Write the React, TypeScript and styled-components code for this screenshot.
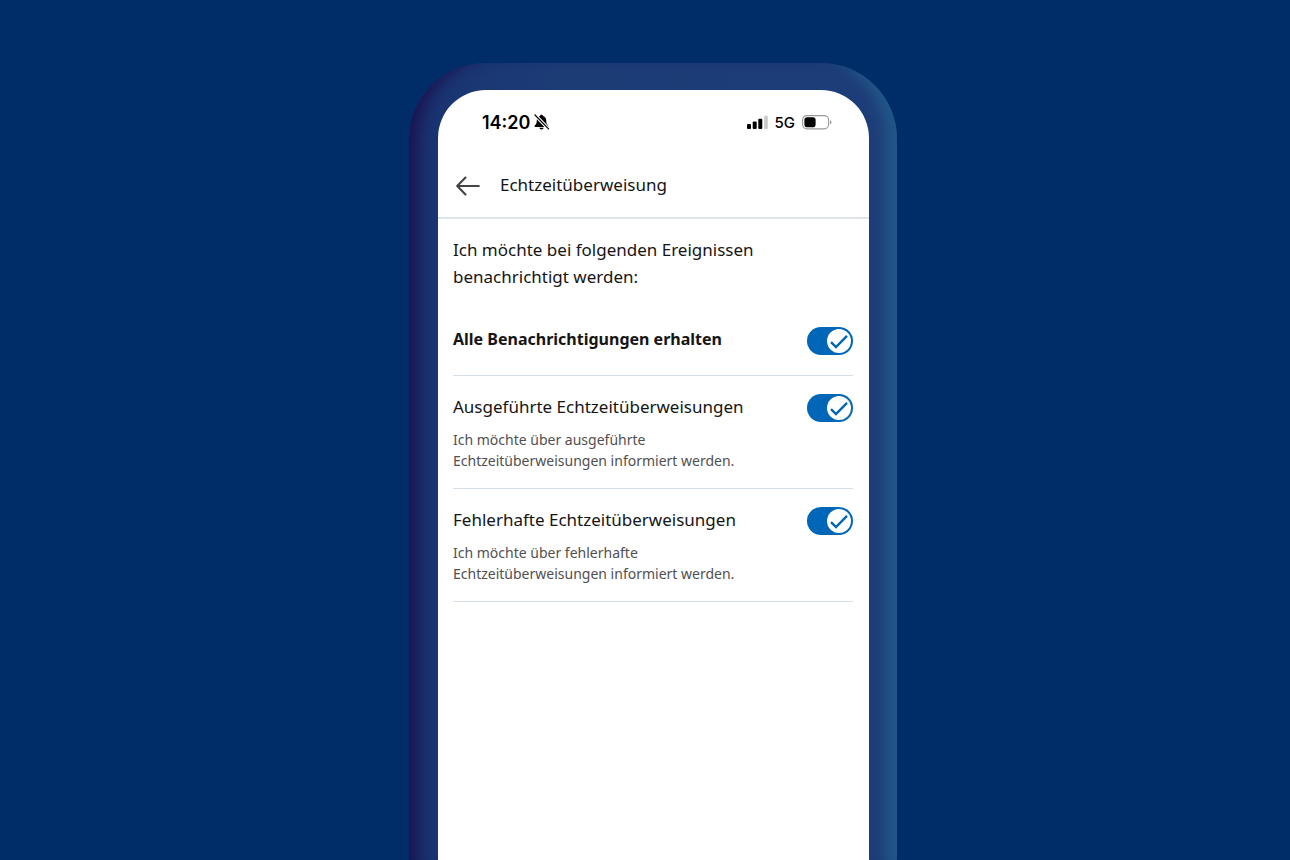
import React, { useState } from "react";
import styled, { createGlobalStyle } from "styled-components";

const GlobalStyle = createGlobalStyle`
  *, *::before, *::after { box-sizing: border-box; }
  body {
    margin: 0;
    background: #002d68;
    color: #151515;
    font-family: "Noto Sans", "Open Sans", sans-serif;
  }
`;

const Page = styled.main`
  display: flex;
  justify-content: center;
  min-height: 100vh;
  padding: 63px 0 0 16px;
  background: #002d68;
`;

const Phone = styled.div`
  display: flex;
  width: 100%;
  max-width: 488px;
  padding: 27px 28px 0 29px;
  border-radius: 76px 76px 0 0;
  background: linear-gradient(90deg, #193370 0%, #1c3c76 30%, #1d3d78 100%);
  box-shadow:
    inset 22px 2px 16px -13px #191452,
    inset -24px 0 14px -12px #225788;
`;

const Screen = styled.div`
  flex: 1;
  min-width: 0;
  border-radius: 48px 48px 0 0;
  background: #fff;
`;

const StatusBar = styled.div`
  display: flex;
  align-items: center;
  justify-content: space-between;
  height: 64px;
  padding: 0 37px 0 44px;
  color: #000;
  font-family: Inter, sans-serif;
`;

const StatusGroup = styled.div<{ $gap: number }>`
  display: flex;
  align-items: center;
  gap: ${({ $gap }) => $gap}px;
`;

const Time = styled.time`
  padding-top: 2px;
  font-size: 18px;
  font-weight: 600;
  line-height: 24px;
`;

const Network = styled.span`
  padding-top: 2px;
  font-size: 15px;
  font-weight: 500;
  line-height: 20px;
`;

const Header = styled.header`
  display: flex;
  align-items: center;
  gap: 20px;
  height: 65px;
  padding: 0 18px;
  border-bottom: 2px solid #dde5ec;
`;

const BackButton = styled.button`
  display: flex;
  padding: 0;
  border: 0;
  background: none;
  color: #444;
  cursor: pointer;
`;

const Title = styled.h1`
  margin: 0;
  padding-bottom: 2px;
  font-size: 17px;
  font-weight: 400;
  line-height: 25px;
`;

const Content = styled.section`
  padding: 17px 16px 32px 15px;
`;

const Intro = styled.p`
  max-width: 320px;
  margin: 0 0 19px;
  font-size: 17px;
  line-height: 27px;
`;

const Row = styled.div<{ $compact?: boolean }>`
  display: flex;
  align-items: flex-start;
  justify-content: space-between;
  padding: 18px 0 ${({ $compact }) => ($compact ? 20 : 17)}px;
  border-bottom: 1px solid #d5dfe9;
`;

const RowText = styled.div`
  display: flex;
  flex-direction: column;
  gap: 10px;
`;

const Label = styled.label<{ $strong?: boolean }>`
  font-size: ${({ $strong }) => ($strong ? 16 : 17)}px;
  font-weight: ${({ $strong }) => ($strong ? 700 : 400)};
  line-height: 25px;
`;

const Description = styled.p`
  max-width: 290px;
  margin: 0;
  color: #505050;
  font-size: 14px;
  line-height: 21px;
`;

const SwitchBox = styled.span`
  display: grid;
  flex: none;
  width: 46px;
  height: 28px;

  & > * {
    grid-area: 1 / 1;
  }
`;

const SwitchInput = styled.input`
  width: 46px;
  height: 28px;
  margin: 0;
  border-radius: 14px;
  appearance: none;
  background: #b4bdc6;
  cursor: pointer;

  &:checked {
    background: #0066b8;
  }
`;

const Knob = styled.span<{ $on: boolean }>`
  display: flex;
  align-self: center;
  justify-self: ${({ $on }) => ($on ? "end" : "start")};
  width: 24px;
  height: 24px;
  margin: 0 2px;
  border-radius: 50%;
  background: #fff;
  pointer-events: none;
`;

interface SettingProps {
  id: string;
  label: string;
  description?: string;
  strong?: boolean;
  checked: boolean;
  onChange: (checked: boolean) => void;
}

function Setting({ id, label, description, strong, checked, onChange }: SettingProps) {
  return (
    <Row $compact={!description}>
      <RowText>
        <Label htmlFor={id} $strong={strong}>{label}</Label>
        {description && <Description>{description}</Description>}
      </RowText>
      <SwitchBox>
        <SwitchInput
          id={id}
          type="checkbox"
          checked={checked}
          onChange={(e) => onChange(e.target.checked)}
        />
        <Knob $on={checked}>
          {checked && (
            <svg width="24" height="24" viewBox="0 0 24 24" fill="none" stroke="#0066b8" strokeWidth="2.4" aria-hidden="true">
              <path d="M4 13.2 9 18 20 6.800" />
            </svg>
          )}
        </Knob>
      </SwitchBox>
    </Row>
  );
}

const MutedBell = () => (
  <svg width="17" height="18" viewBox="-0.5 -0.5 18 19" aria-hidden="true">
    <path
      fill="#000"
      d="M8.5 1.2c-.9 0-1.6.6-1.7 1.4C4.6 3.3 3.5 5 3.500 7.300c0 2.700-.6 3.800-1.600 4.800-.5.5-.7.8-.7 1.300 0 .6.5 1 1.100 1h12.400c.6 0 1.100-.4 1.100-1 0-.5-.2-.8-.7-1.300-1-1-1.600-2.100-1.600-4.800 0-2.300-1.100-4-3.300-4.700-.1-.8-.8-1.400-1.700-1.400ZM6.300 15.200c.2 1.100 1.100 1.800 2.200 1.800s2-.7 2.200-1.800Z"
    />
    <path d="M1.600 1.600 16 16.300" stroke="#fff" strokeWidth="3.600" />
    <path d="M1.600 1.600 16 16.300" stroke="#000" strokeWidth="1.300" strokeLinecap="round" />
  </svg>
);

const Signal = () => (
  <svg width="21" height="16" viewBox="0 0 21 16" aria-hidden="true">
    <rect x="0" y="10" width="4" height="5" rx="1.100" />
    <rect x="5.700" y="7.500" width="4" height="7.500" rx="1.100" />
    <rect x="11.300" y="4.700" width="4" height="10.300" rx="1.100" />
    <rect x="17.200" y="1.800" width="3.600" height="13.200" rx="1.100" fill="#c9c9c9" />
  </svg>
);

const Battery = () => (
  <svg width="30" height="15" viewBox="0 0 30 15" aria-hidden="true">
    <rect x="0.600" y="0.600" width="26" height="13.300" rx="4.300" fill="none" stroke="#999" strokeWidth="1.100" />
    <rect x="2.400" y="2.300" width="11.200" height="9.900" rx="2.800" />
    <path d="M28 5.200v4.200c.9-.4 1.500-1.200 1.500-2.100s-.6-1.700-1.500-2.100Z" fill="#999" />
  </svg>
);

const notifications = [
  {
    id: "executed",
    label: "Ausgeführte Echtzeitüberweisungen",
    description: "Ich möchte über ausgeführte Echtzeitüberweisungen informiert werden.",
  },
  {
    id: "failed",
    label: "Fehlerhafte Echtzeitüberweisungen",
    description: "Ich möchte über fehlerhafte Echtzeitüberweisungen informiert werden.",
  },
];

export default function App() {
  const [enabled, setEnabled] = useState<Record<string, boolean>>({ executed: true, failed: true });
  const all = notifications.every(({ id }) => enabled[id]);

  return (
    <>
      <GlobalStyle />
      <Page>
        <Phone>
          <Screen>
            <StatusBar>
              <StatusGroup $gap={3}>
                <Time>14:20</Time>
                <MutedBell />
              </StatusGroup>
              <StatusGroup $gap={7}>
                <Signal />
                <Network>5G</Network>
                <Battery />
              </StatusGroup>
            </StatusBar>
            <Header>
              <BackButton type="button" aria-label="Zurück">
                <svg width="24" height="20" viewBox="0 0 24 20" fill="none" stroke="currentColor" strokeWidth="2.100" strokeLinecap="round" strokeLinejoin="round" aria-hidden="true">
                  <path d="M9.500 1.500 1.200 10l8.300 8.500M1.200 10h21.600" />
                </svg>
              </BackButton>
              <Title>Echtzeitüberweisung</Title>
            </Header>
            <Content>
              <Intro>Ich möchte bei folgenden Ereignissen benachrichtigt werden:</Intro>
              <Setting
                id="all"
                label="Alle Benachrichtigungen erhalten"
                strong
                checked={all}
                onChange={(on) => setEnabled({ executed: on, failed: on })}
              />
              {notifications.map((item) => (
                <Setting
                  key={item.id}
                  {...item}
                  checked={enabled[item.id]}
                  onChange={(on) => setEnabled((prev) => ({ ...prev, [item.id]: on }))}
                />
              ))}
            </Content>
          </Screen>
        </Phone>
      </Page>
    </>
  );
}
